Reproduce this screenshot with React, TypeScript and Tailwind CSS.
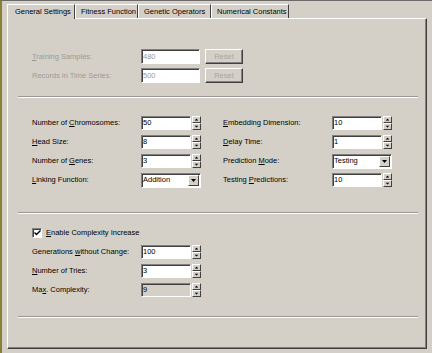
import React from 'react';

const font = "font-['Liberation_Sans',Arial,sans-serif] text-[7.5px] leading-none";

type LabelProps = { text: string; u?: number; disabled?: boolean };

function Label({ text, u, disabled }: LabelProps) {
  const color = disabled ? 'text-[#9c9a96]' : 'text-black';
  if (u === undefined) return <span className={`w-[109px] shrink-0 ${color}`}>{text}</span>;
  return (
    <span className={`w-[109px] shrink-0 ${color}`}>
      {text.slice(0, u)}
      <span className="underline underline-offset-[1px]">{text[u]}</span>
      {text.slice(u + 1)}
    </span>
  );
}

function Arrow({ up }: { up?: boolean }) {
  return (
    <svg width="5" height="3" viewBox="0 0 5 3" className="block">
      <path d={up ? 'M2.5 0 L5 3 L0 3 Z' : 'M0 0 L5 0 L2.5 3 Z'} fill="#000" />
    </svg>
  );
}

function SpinButton({ up }: { up?: boolean }) {
  return (
    <div className="flex h-[7px] w-[9px] items-center justify-center border border-t-white border-l-white border-r-[#404040] border-b-[#404040] bg-[#d4d0c8]">
      <div className="scale-75">
        <Arrow up={up} />
      </div>
    </div>
  );
}

type SpinProps = { value: string; grayBg?: boolean };

function SpinField({ value, grayBg }: SpinProps) {
  return (
    <div className="flex h-[14px] items-stretch">
      <div
        className={`flex w-[50px] items-center border border-t-[#808080] border-l-[#808080] border-r-white border-b-white pl-[1px] shadow-[inset_1px_1px_0_#404040] ${
          grayBg ? 'bg-[#d4d0c8]' : 'bg-white'
        } text-black`}
      >
        {value}
      </div>
      <div className="ml-[1px] flex flex-col">
        <SpinButton up />
        <SpinButton />
      </div>
    </div>
  );
}

function Combo({ value }: { value: string }) {
  return (
    <div className="flex h-[15px] w-[60px] items-center border border-t-[#808080] border-l-[#808080] border-r-white border-b-white bg-white pl-[1px] shadow-[inset_1px_1px_0_#404040]">
      <span className="flex-1">{value}</span>
      <div className="mr-[1px] flex h-[11px] w-[11px] items-center justify-center border border-t-white border-l-white border-r-[#404040] border-b-[#404040] bg-[#d4d0c8]">
        <Arrow />
      </div>
    </div>
  );
}

function Separator() {
  return <div className="ml-[10px] h-[2px] w-[400px] border-t border-t-[#9a9894] border-b border-b-white" />;
}

type Row = { label: string; u?: number; kind: 'spin' | 'combo'; value: string; grayBg?: boolean };

function Column({ rows }: { rows: Row[] }) {
  return (
    <div className="flex w-[169px] flex-col gap-[5px]">
      {rows.map((r) => (
        <div key={r.label} className="flex h-[14px] items-center">
          <Label text={r.label} u={r.u} />
          {r.kind === 'spin' ? <SpinField value={r.value} grayBg={r.grayBg} /> : <Combo value={r.value} />}
        </div>
      ))}
    </div>
  );
}

const tabs = [
  { name: 'General Settings', w: 'w-[68px]' },
  { name: 'Fitness Function', w: 'w-[63px]' },
  { name: 'Genetic Operators', w: 'w-[73px]' },
  { name: 'Numerical Constants', w: 'w-[78px]' },
];

export default function App() {
  const leftRows: Row[] = [
    { label: 'Number of Chromosomes:', u: 10, kind: 'spin', value: '50' },
    { label: 'Head Size:', u: 0, kind: 'spin', value: '8' },
    { label: 'Number of Genes:', u: 10, kind: 'spin', value: '3' },
    { label: 'Linking Function:', u: 0, kind: 'combo', value: 'Addition' },
  ];
  const rightRows: Row[] = [
    { label: 'Embedding Dimension:', u: 0, kind: 'spin', value: '10' },
    { label: 'Delay Time:', u: 0, kind: 'spin', value: '1' },
    { label: 'Prediction Mode:', u: 11, kind: 'combo', value: 'Testing' },
    { label: 'Testing Predictions:', u: 8, kind: 'spin', value: '10' },
  ];
  const complexityRows: Row[] = [
    { label: 'Generations without Change:', u: 12, kind: 'spin', value: '100' },
    { label: 'Number of Tries:', u: 0, kind: 'spin', value: '3' },
    { label: 'Max. Complexity:', u: 2, kind: 'spin', value: '9', grayBg: true },
  ];

  return (
    <div
      className={`box-border h-[353px] w-[432px] overflow-hidden border-t border-t-[#6b6a68] border-l-2 border-l-[#858236] bg-[#d4d0c8] pt-[3px] pl-[5px] ${font}`}
    >
      {/* tab strip */}
      <div className="flex h-[14px] items-end">
        {tabs.map((t, i) =>
          i === 0 ? (
            <div
              key={t.name}
              className={`relative z-10 -mb-[1px] flex h-[15px] ${t.w} items-center border-t border-t-white border-l border-l-white border-r border-r-[#404040] bg-[#d4d0c8] pl-[7px] pb-[1px]`}
            >
              {t.name}
            </div>
          ) : (
            <div
              key={t.name}
              className={`flex h-[14px] ${t.w} items-center border-t border-t-white border-l border-l-white border-r border-r-[#404040] bg-[#d4d0c8] pl-[5px]`}
            >
              {t.name}
            </div>
          ),
        )}
      </div>

      {/* panel */}
      <div className="h-[331px] w-[420px] border-t border-t-white border-l border-l-white border-r border-r-[#404040] border-b border-b-[#404040]">
        <div className="h-full border-r border-r-[#808080] border-b border-b-[#808080]">
          {/* reset section */}
          <div className="flex flex-col gap-[4px] pt-[30px] pl-[24px]">
            <div className="flex h-[15px] items-center">
              <Label text="Training Samples:" u={0} disabled />
              <div className="flex h-[15px] w-[59px] items-center border border-t-[#808080] border-l-[#808080] border-r-white border-b-white bg-white pl-[1px] text-[#9c9a96] shadow-[inset_1px_1px_0_#404040]">
                480
              </div>
              <div className="ml-[5px] flex h-[15px] w-[38px] items-center justify-center border border-t-white border-l-white border-r-[#404040] border-b-[#404040] text-[#a8a6a2] shadow-[inset_-1px_-1px_0_#808080]">
                Reset
              </div>
            </div>
            <div className="flex h-[15px] items-center">
              <Label text="Records in Time Series:" disabled />
              <div className="flex h-[15px] w-[59px] items-center border border-t-[#808080] border-l-[#808080] border-r-white border-b-white bg-white pl-[1px] text-[#9c9a96] shadow-[inset_1px_1px_0_#404040]">
                500
              </div>
              <div className="ml-[5px] flex h-[15px] w-[38px] items-center justify-center border border-t-white border-l-white border-r-[#404040] border-b-[#404040] text-[#a8a6a2] shadow-[inset_-1px_-1px_0_#808080]">
                Reset
              </div>
            </div>
          </div>

          <div className="mt-[13px]">
            <Separator />
          </div>

          {/* main settings */}
          <div className="mt-[18px] flex gap-[22px] pl-[24px]">
            <Column rows={leftRows} />
            <Column rows={rightRows} />
          </div>

          <div className="mt-[25px]">
            <Separator />
          </div>

          {/* complexity */}
          <div className="pl-[24px]">
            <div className="mt-[14px] flex h-[10px] items-center gap-[4px]">
              <div className="flex h-[10px] w-[10px] items-center justify-center border border-t-[#808080] border-l-[#808080] border-r-white border-b-white bg-white shadow-[inset_1px_1px_0_#404040]">
                <svg width="7" height="6" viewBox="0 0 7 6">
                  <path d="M0.5 2.5 L2.5 4.5 L6.5 0.5" stroke="#000" strokeWidth="1.4" fill="none" />
                </svg>
              </div>
              <span>
                <span className="underline underline-offset-[1px]">E</span>nable Complexity Increase
              </span>
            </div>
            <div className="mt-[7px]">
              <Column rows={complexityRows} />
            </div>
          </div>

          <div className="mt-[19px]">
            <Separator />
          </div>
        </div>
      </div>
    </div>
  );
}
